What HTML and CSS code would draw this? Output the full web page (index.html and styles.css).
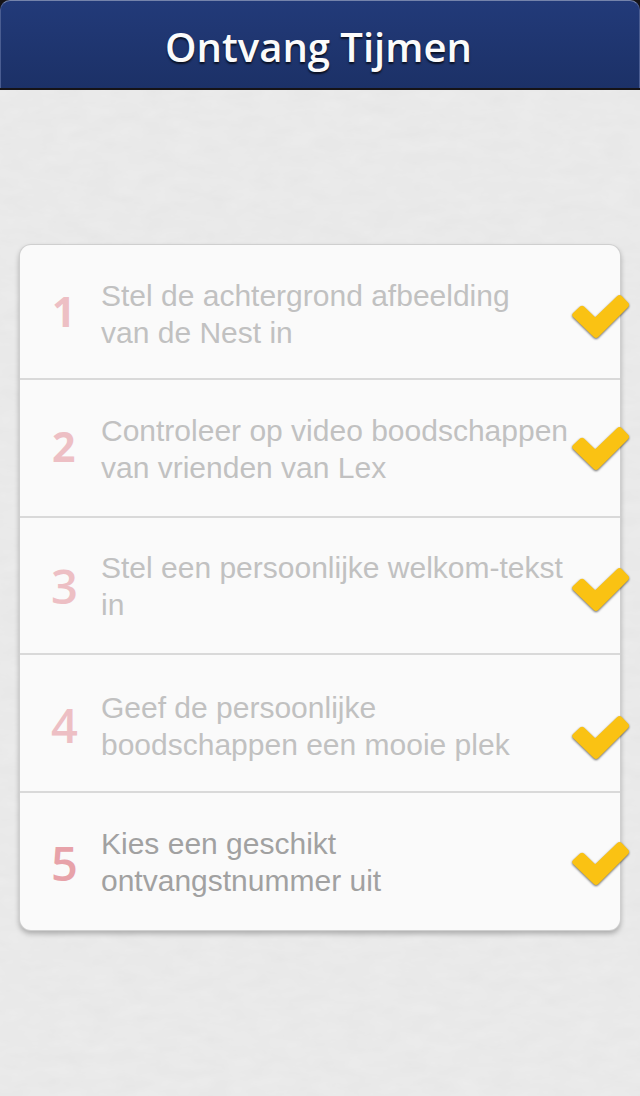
FILE: index.html
```html
<!DOCTYPE html>
<html lang="nl">
<head>
<meta charset="utf-8">
<title>Ontvang Tijmen</title>
<link rel="stylesheet" href="styles.css">
</head>
<body>
<svg class="texture" width="640" height="1006" aria-hidden="true">
  <filter id="leather" x="0" y="0" width="100%" height="100%" color-interpolation-filters="sRGB">
    <feTurbulence type="fractalNoise" baseFrequency="0.035 0.08" numOctaves="3" seed="4" result="n"/>
    <feColorMatrix type="matrix" values="0.02 0.012 0 0 0.899  0.02 0.012 0 0 0.899  0.02 0.012 0 0 0.899  0 0 0 0 1"/>
  </filter>
  <rect width="640" height="1006" filter="url(#leather)"/>
</svg>
<svg class="defs" width="0" height="0" aria-hidden="true">
  <symbol id="check" viewBox="0 0 58 46" overflow="visible">
    <path id="tick" d="M1.100 18.100 L8 11.600 Q10.100 9.800 12.300 11.700 L23.200 22.300 L45.300 1 Q47.500 -0.900 49.700 1.100 L56.200 7.800 Q58 9.800 56.200 12 L26.200 42 Q24 44.100 21.800 42 L1.100 22.100 Q-0.800 20.100 1.100 18.100 Z"/>
  </symbol>
</svg>
<header class="navbar"><div class="navbar-face"><h1 class="title">Ontvang Tijmen</h1></div></header>
<main class="content">
  <ol class="steps">
    <li class="step step-1"><span class="num num-short">1</span><p class="label">Stel de achtergrond afbeelding<br>van de Nest in</p><svg class="check"><use href="#check"/></svg></li>
    <li class="step step-2"><span class="num num-short">2</span><p class="label">Controleer op video boodschappen<br>van vrienden van Lex</p><svg class="check"><use href="#check"/></svg></li>
    <li class="step step-3"><span class="num">3</span><p class="label">Stel een persoonlijke welkom-tekst<br>in</p><svg class="check"><use href="#check"/></svg></li>
    <li class="step step-4"><span class="num">4</span><p class="label">Geef de persoonlijke<br>boodschappen een mooie plek</p><svg class="check"><use href="#check"/></svg></li>
    <li class="step step-5"><span class="num">5</span><p class="label">Kies een geschikt<br>ontvangstnummer uit</p><svg class="check"><use href="#check"/></svg></li>
  </ol>
</main>
</body>
</html>
```
FILE: styles.css
```css
* { box-sizing: border-box; }
body { margin: 0; width: 640px; height: 1096px; overflow: hidden; background: #e9e9e9; font-family: "Liberation Sans", Arial, sans-serif; }
.texture { position: absolute; left: 0; top: 90px; z-index: -1; }
.defs { position: absolute; }
.navbar { height: 90px; background: #151316; padding-bottom: 2px; }
.navbar-face {
  height: 88px; display: flex; justify-content: center;
  background: linear-gradient(#223a79, #1c3167);
  border: 1px solid #4a5d91; border-top-color: #7483ab; border-bottom: 0;
  border-radius: 10px 10px 0 0;
}
.title {
  margin: 0; padding: 21px 3px 0 0; height: 88px; line-height: 50px; white-space: nowrap;
  font-family: "Open Sans", sans-serif; font-weight: 600; font-size: 40px; letter-spacing: 0;
  color: #fbfbfb; text-shadow: 0 2px 2px rgba(0, 0, 0, .7);
}
.content { padding: 155px 20px 0; }
.steps {
  list-style: none; margin: 0; padding: 0; height: 685px;
  display: grid; grid-template-rows: 135px 138px 137px 138px 137px;
  background: #fafafa; border-radius: 11px;
  box-shadow: 0 0 0 1px #cfcfcf, 0 3px 5px 1px rgba(0, 0, 0, .25);
}
.step { position: relative; display: flex; align-items: flex-start; border-bottom: 2px solid #d9d9d9; }
.step:last-child { border-bottom: 0; }
.num {
  width: 81px; padding-left: 31px; line-height: 60px;
  font-family: "Open Sans", sans-serif; font-weight: 600; font-size: 47px; color: #edbfc4;
}
.num-short { font-size: 41px; padding-left: 32px; font-weight: 700; }
.label { margin: 0; font-size: 30px; line-height: 37px; color: #c1c1c1; white-space: nowrap; }
.step-5 .num { color: #e7a2a9; }
.step-5 .label { color: #a1a1a1; }
.step-1 .num { margin-top: 36px; }
.step-2 .num { margin-top: 36px; }
.step-3 .num { margin-top: 38px; }
.step-4 .num { margin-top: 40px; }
.step-5 .num { margin-top: 40px; }
.step-1 .label, .step-2 .label, .step-5 .label { padding-top: 32px; }
.step-3 .label { padding-top: 31px; }
.step-4 .label { padding-top: 34px; }
.check { position: absolute; right: -10px; width: 58px; height: 46px; overflow: visible; filter: drop-shadow(0 1.500px .8px rgba(0, 0, 0, .6)); }
.step-1 .check { top: 50px; }
.step-2 .check { top: 47px; }
.step-3 .check { top: 50px; }
.step-4 .check { top: 61px; }
.step-5 .check { top: 49px; }
#tick { fill: #fac213; }
```
